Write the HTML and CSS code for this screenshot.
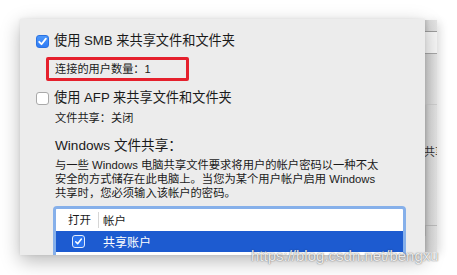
FILE: index.html
```html
<!DOCTYPE html>
<html lang="zh">
<head>
<meta charset="utf-8">
<link rel="stylesheet" href="styles.css">
</head>
<body>
<div class="stage">
  <div class="sheet">
    <div class="opt">
      <span class="cb checked"><svg viewBox="0 0 13 13" width="13" height="13"><path d="M3.2 6.8 L5.5 9.2 L9.9 3.6" fill="none" stroke="#fff" stroke-width="1.8" stroke-linecap="round" stroke-linejoin="round"/></svg></span>
      <span class="opt-label">使用 SMB 来共享文件和文件夹</span>
    </div>
    <div class="highlight">连接的用户数量：1</div>
    <div class="opt opt2">
      <span class="cb"></span>
      <span class="opt-label">使用 AFP 来共享文件和文件夹</span>
    </div>
    <div class="sub">文件共享：关闭</div>
    <div class="win-title">Windows 文件共享：</div>
    <p class="desc">与一些 Windows 电脑共享文件要求将用户的帐户密码以一种不太<br>安全的方式储存在此电脑上。当您为某个用户帐户启用 Windows<br>共享时，您必须输入该帐户的密码。</p>
    <div class="table">
      <div class="thead">
        <span class="col-open">打开</span>
        <span class="col-acct">帐户</span>
      </div>
      <div class="trow selected">
        <span class="col-open"><span class="tcb"><svg viewBox="0 0 13 13" width="11" height="11"><path d="M3.2 6.8 L5.5 9.2 L9.9 3.6" fill="none" stroke="#fff" stroke-width="1.8" stroke-linecap="round" stroke-linejoin="round"/></svg></span></span>
        <span class="col-acct">共享账户</span>
      </div>
      <div class="trow">
        <span class="col-open"><span class="tcb plain"></span></span>
        <span class="col-acct"></span>
      </div>
    </div>
  </div>
  <div class="behind">
    <div class="b-top"></div>
    <div class="b-field"></div>
    <div class="b-mid"></div>
    <div class="b-low"><span class="b-text">共享</span></div>
    <div class="b-box"></div>
  </div>
  <div class="watermark">https://blog.csdn.net/bengxu</div>
</div>
</body>
</html>
```

FILE: styles.css
```css
html, body {
  margin: 0;
  padding: 0;
  background: #ffffff;
}
body {
  width: 457px;
  height: 275px;
  overflow: hidden;
  font-family: "Liberation Sans", "Noto Sans CJK SC", sans-serif;
  color: #1a1a1a;
}
.stage {
  position: relative;
  display: flex;
  align-items: flex-start;
  padding: 19px 0 0 20px;
  height: 256px;
}
.sheet {
  position: relative;
  z-index: 2;
  width: 405px;
  height: 236px;
  box-sizing: border-box;
  background: #ececec;
  overflow: hidden;
  padding: 15px 0 0 16px;
  box-shadow: 0 6px 18px rgba(0,0,0,0.28), 0 0 3px rgba(0,0,0,0.08);
}
.opt {
  display: flex;
  align-items: center;
  gap: 5px;
  height: 14px;
}
.opt-label {
  font-size: 13.2px;
  line-height: 14px;
  white-space: nowrap;
}
.cb {
  width: 13px;
  height: 13px;
  box-sizing: border-box;
  border-radius: 3px;
  background: #fff;
  border: 1px solid #a9a9a9;
  display: flex;
  flex: none;
}
.cb.checked {
  background: linear-gradient(#4c97fa, #2f7cf5);
  border: 1px solid #2a72e2;
}
.cb svg {
  margin: -1px;
}
.highlight {
  margin: 9px 0 0 10px;
  width: 143px;
  height: 24px;
  box-sizing: border-box;
  border: 3px solid #e5202c;
  border-radius: 2px;
  font-size: 11.2px;
  line-height: 18px;
  padding-left: 6px;
}
.opt2 {
  margin-top: 10px;
}
.sub {
  margin: 6px 0 0 19px;
  font-size: 11.2px;
  line-height: 14px;
}
.win-title {
  margin: 13px 0 0 19px;
  font-size: 13.6px;
  line-height: 16px;
}
.desc {
  margin: 4px 0 0 19px;
  font-size: 11.3px;
  line-height: 14px;
  white-space: nowrap;
}
.table {
  margin: 6px 0 0 17px;
  width: 353px;
  height: 60px;
  box-sizing: border-box;
  border: 3px solid #86b0ea;
  border-bottom: none;
  border-radius: 4px 4px 0 0;
  background: #fff;
}
.thead, .trow {
  display: flex;
  align-items: center;
}
.thead {
  height: 22px;
  font-size: 11.5px;
}
.thead .col-open {
  box-sizing: border-box;
  width: 43px;
  padding-left: 12px;
  border-right: 1px solid #d6d6d6;
  line-height: 16px;
}
.thead .col-acct {
  padding-left: 4px;
}
.trow {
  height: 21px;
  font-size: 12px;
}
.trow .col-open {
  box-sizing: border-box;
  width: 44px;
  padding-left: 16px;
  display: flex;
}
.trow .col-acct {
  padding-left: 3px;
}
.trow.selected {
  background: #1d5bd0;
  color: #fff;
}
.tcb {
  width: 13px;
  height: 13px;
  box-sizing: border-box;
  border-radius: 3px;
  background: #2a72ee;
  border: 1px solid #e4ecfb;
  display: flex;
  align-items: center;
  justify-content: center;
}
.tcb.plain {
  border-color: #2a6fe0;
  margin-top: 10px;
}
.behind {
  position: relative;
  z-index: 1;
  width: 12px;
  height: 232px;
  margin-top: 1px;
  display: flex;
  flex-direction: column;
  background: linear-gradient(to right, #c9c9c9, #dcdcdc 40%, #e3e3e3);
  box-shadow: 3px 2px 10px rgba(0,0,0,0.12);
}
.b-top {
  height: 11px;
}
.b-field {
  height: 21px;
  background: #f7f7f7;
  border-top: 1px solid #9d9d9d;
  border-bottom: 1px solid #a7a7a7;
}
.b-mid {
  height: 50px;
  border-bottom: 1px solid #cfcfcf;
  background: linear-gradient(to right, #d2d2d2, #e6e6e6);
}
.b-low {
  height: 120px;
  overflow: hidden;
  padding-top: 40px;
  box-sizing: border-box;
}
.b-text {
  display: block;
  font-size: 11px;
  line-height: 14px;
  white-space: nowrap;
  color: #333;
  margin-left: -1px;
}
.b-box {
  height: 10px;
  border-top: 1px solid #bdbdbd;
  border-left: 1px solid #bdbdbd;
  margin-left: 0;
}
.watermark {
  position: absolute;
  z-index: 3;
  left: 251px;
  top: 247px;
  font-size: 15px;
  line-height: 18px;
  color: rgba(255,255,255,0.85);
  text-shadow: 0 0 1px rgba(90,90,90,0.8), 0 0 2px rgba(0,0,0,0.25);
  white-space: nowrap;
}
```
